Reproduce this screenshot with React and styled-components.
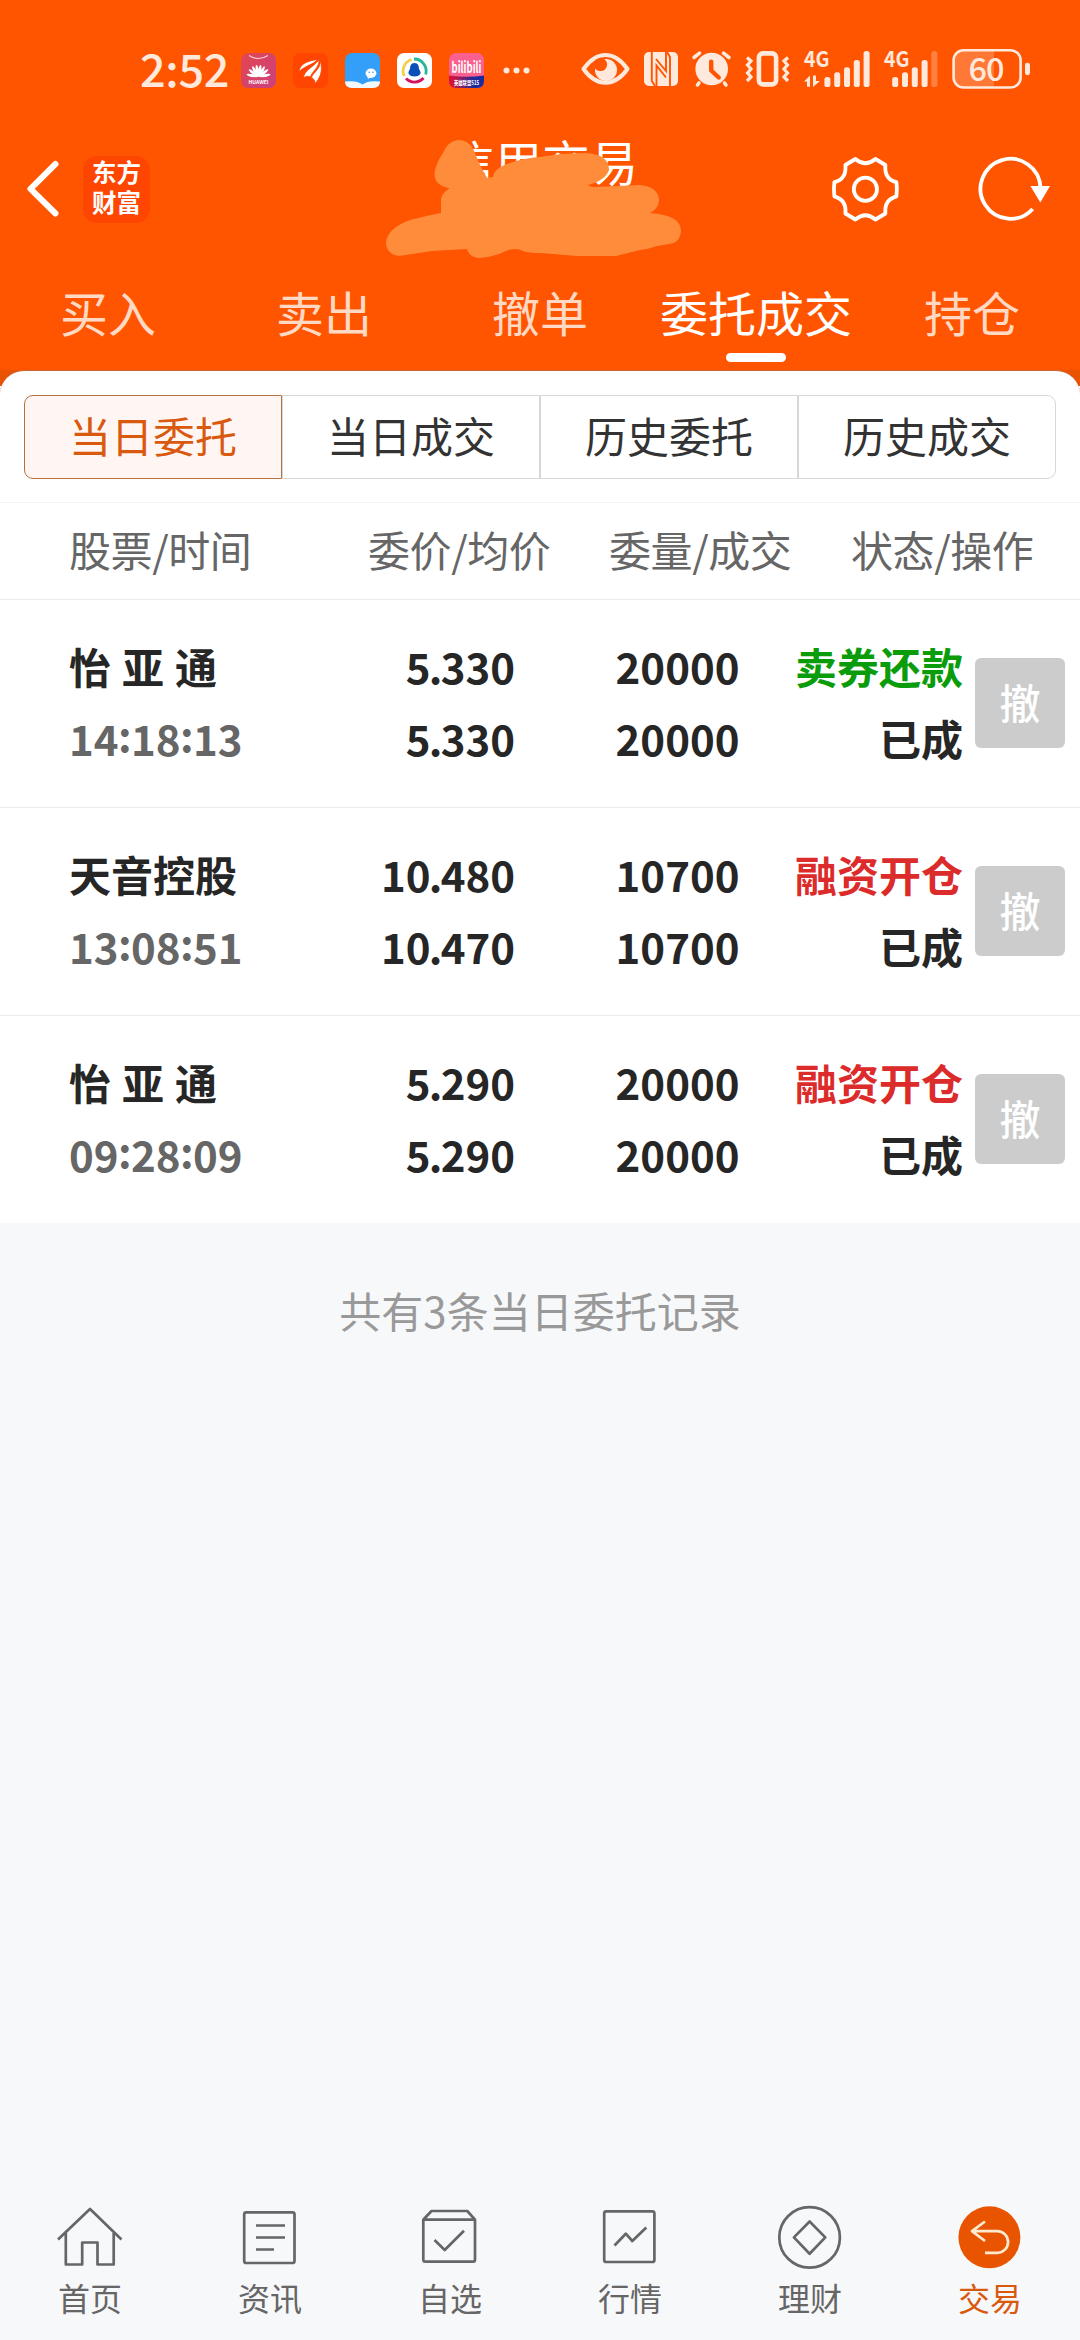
import React from 'react';
import styled, { createGlobalStyle } from 'styled-components';

const GlobalStyle = createGlobalStyle`
    * {
        box-sizing: border-box;
    }

    body {
        margin: 0;
        background: #f7f8fa;
        font-family: "Noto Sans CJK SC", "Noto Sans", sans-serif;
    }

    svg {
        display: block;
        flex-shrink: 0;
        overflow: visible;
    }
`;

const Screen = styled.div`
    display: flex;
    flex-direction: column;
    width: 1080px;
    height: 2340px;
    overflow: hidden;
    background: #f7f8fa;
`;

const Header = styled.header`
    background: #ff5500;
`;

const StatusBar = styled.div`
    display: flex;
    align-items: center;
    height: 138px;
    padding: 2px 49px 0 140px;
`;

const Clock = styled.span`
    width: 101px;
    padding-bottom: 5px;
    color: #ffe9dc;
    font-size: 45px;
    font-weight: 500;
    letter-spacing: -0.3px;
    line-height: 50px;
`;

const AppIcons = styled.div`
    display: flex;
    align-items: center;
    gap: 17px;
`;

const SystemIcons = styled.div`
    display: flex;
    gap: 14px;
    margin-left: auto;
`;

const NavBar = styled.div`
    position: relative;
    display: flex;
    align-items: center;
    height: 102px;
    padding: 0 26px 0 24px;
`;

const AppLogo = styled.div`
    display: flex;
    flex-direction: column;
    width: 67px;
    height: 67px;
    margin-left: 19px;
    padding-top: 1px;
    border-radius: 14px;
    background: #ff4600;
    color: #fff;
    font-size: 24.5px;
    font-weight: 700;
    line-height: 30px;
    text-align: center;
`;

const Title = styled.h1`
    flex: 1;
    align-self: flex-start;
    margin: 0 0 0 105px;
    color: #fff;
    font-size: 48px;
    font-weight: 400;
    line-height: 44px;
    text-align: center;
`;

/* hand-painted smudge that hides the account name */
const Smudge = styled.svg`
    position: absolute;
    left: 380px;
    top: 0;
`;

const NavActions = styled.div`
    display: flex;
    gap: 73px;
`;

const Tabs = styled.nav`
    display: flex;
    height: 130px;
`;

const Tab = styled.div`
    display: flex;
    flex: 1;
    flex-direction: column;
    align-items: center;
    padding-top: 47px;
    color: ${({ $active }) => ($active ? '#fff' : '#ffd9c4')};
    font-size: 48px;
    line-height: 48px;

    &::after {
        content: "";
        width: 60px;
        height: 9px;
        margin-top: 18px;
        border-radius: 5px;
        background: ${({ $active }) => ($active ? '#fff' : 'transparent')};
    }
`;

const CardTop = styled.div`
    background: linear-gradient(#e85200 16px, #fff 16px);
`;

const Card = styled.section`
    height: 132px;
    padding: 24px 24px 0;
    border-top: 1px solid #c8642f;
    border-radius: 24px 24px 0 0;
    background: #fff;
`;

const Segments = styled.div`
    display: flex;
`;

const Segment = styled.div`
    flex: 1;
    height: 84px;
    border: 1px solid ${({ $active }) => ($active ? '#b5713f' : '#d5d8d8')};
    background: ${({ $active }) => ($active ? '#fff6f3' : '#fff')};
    color: ${({ $active }) => ($active ? '#d9590f' : '#333')};
    font-size: 42px;
    line-height: 78px;
    text-align: center;

    &:first-child {
        border-radius: 9px 0 0 9px;
    }

    &:last-child {
        border-radius: 0 9px 9px 0;
    }
`;

const TableHead = styled.div`
    display: grid;
    grid-template-columns: 299px 241px 242px 184px;
    height: 97px;
    padding-left: 69px;
    border-top: 1px solid #f5f5f5;
    background: #fff;
    color: #666;
    font-size: 42px;
    letter-spacing: -0.4px;
    line-height: 92px;
    white-space: nowrap;
`;

const Row = styled.div`
    display: grid;
    grid-template-columns: 210px 236px 224.5px 223.5px 90px;
    height: 208px;
    padding: 30px 0 0 69px;
    border-top: 1px solid #ebebeb;
    background: #fff;
    color: #262626;
    font-size: 42px;
    font-weight: 700;
    line-height: 72px;
    white-space: nowrap;
`;

const Cell = styled.div`
    text-align: ${({ $left }) => ($left ? 'left' : 'right')};
`;

const Name = styled.div`
    word-spacing: 1.5px;
`;

const Time = styled.div`
    color: #666;
`;

const Colon = styled.span`
    position: relative;
    top: -4px;
    margin: 0 -0.6px;
`;

const Dot = styled.span`
    margin: 0 -1.8px;
`;

const Action = styled.div`
    color: ${({ $sell }) => ($sell ? '#0a9c0a' : '#dc2b2b')};
`;

const CancelButton = styled.button`
    width: 90px;
    height: 90px;
    margin: 28px 0 0 12px;
    padding: 0 0 5px;
    border: 0;
    border-radius: 6px;
    background: #ccc;
    color: #fff;
    font-family: inherit;
    font-size: 41px;
    font-weight: 500;
    line-height: 80px;
`;

const Summary = styled.p`
    margin: 64px 0 0;
    color: #999;
    font-size: 42px;
    line-height: 46px;
    text-align: center;
`;

const BottomNav = styled.nav`
    display: flex;
    height: 139px;
    margin-top: auto;
`;

const BottomItem = styled.div`
    display: flex;
    flex: 1;
    flex-direction: column;
    align-items: center;
    color: ${({ $active }) => ($active ? '#d9590f' : '#666')};
    font-size: 32px;
    line-height: 40px;
`;

const BottomLabel = styled.span`
    margin-top: 4px;
`;

const LIGHT = '#ffe9dc';

const HuaweiIcon = () => (
    <svg width="35" height="35">
        <defs>
            <linearGradient id="hw" x1="0" y1="0" x2="1" y2="1">
                <stop offset="0" stopColor="#e2474f" />
                <stop offset="1" stopColor="#cb3f80" />
            </linearGradient>
        </defs>
        <rect width="35" height="35" rx="7" fill="url(#hw)" />
        <path d="M8 2.5Q17.5 8.5 27 2.5" fill="none" stroke="#ffc9cf" strokeWidth="1.2" />
        {[-78, -52, -30, -10, 10, 30, 52, 78].map((a) => (
            <ellipse key={a} cx="17.5" cy="17.6" rx="1.5" ry="5.8" fill="#fff" transform={`rotate(${a} 17.5 24)`} />
        ))}
        <path d="M7 24.2H28V26H7Z" fill="#d84465" />
        <text x="17.5" y="30.5" textAnchor="middle" textLength="20" fontSize="5" fontWeight="700" fill="#fff">HUAWEI</text>
    </svg>
);

const EastmoneyIcon = () => (
    <svg width="35" height="35">
        <rect width="35" height="35" rx="7" fill="#ff4500" />
        <g fill="#fff" stroke="#ff4500" strokeWidth=".8">
            <path d="M6 18.5C7 11 14 8 24.5 6.5C20 12 14 11.5 6 18.5Z" />
            <path d="M10.5 25C11 17 20 15 26 6.5C26.5 15 19 18 17.5 24C14.5 22.5 12.5 23.5 10.5 25Z" />
            <path d="M22 30.5C22 26.5 20 25.5 18.5 24.5C20.5 19 27 17 27.5 7.5C30 19 27 25 22 30.5Z" />
        </g>
    </svg>
);

const ReaderIcon = () => (
    <svg width="35" height="35">
        <rect width="35" height="35" rx="7" fill="#349ff8" />
        <path d="M0 28.5Q12 27 17.5 31.5Q23 27 35 28.5Q35 35 28 35H7Q0 35 0 28.5Z" fill="#f3f8ff" />
        <ellipse cx="26" cy="20.3" rx="5.4" ry="4.7" fill="#fff" />
        <path d="M22 22L23 26L26 24Z" fill="#fff" />
        <circle cx="24.2" cy="19.3" r=".8" fill="#349ff8" />
        <circle cx="28" cy="19.3" r=".8" fill="#349ff8" />
    </svg>
);

const PenguinIcon = () => (
    <svg width="35" height="35">
        <rect width="35" height="35" rx="7" fill="#fff" />
        <g fill="none" strokeWidth="2.8">
            <path d="M7.2 23A12 12 0 0 1 14.5 6.5" stroke="#f2d04b" />
            <path d="M17 6A12 12 0 0 1 28.6 21.5" stroke="#27b79c" />
            <path d="M26.5 25A12 12 0 0 1 9 25.5" stroke="#d4145a" />
        </g>
        <path d="M17.5 10C21 10 22 13 22 16C24 19 24 21 22.7 21.5C22 24 13 24 12.3 21.5C11 21 11 19 13 16C13 13 14 10 17.5 10Z" fill="#0d4fb8" />
    </svg>
);

const BilibiliIcon = () => (
    <svg width="35" height="35">
        <defs>
            <linearGradient id="bl">
                <stop offset=".1" stopColor="#d2143c" />
                <stop offset=".7" stopColor="#1c2b9c" />
            </linearGradient>
        </defs>
        <rect width="35" height="35" rx="7" fill="#fb5f8e" />
        <path d="M0 22.5Q17.5 25 35 22.5V28Q35 35 28 35H7Q0 35 0 28Z" fill="url(#bl)" />
        <text x="17.5" y="20" textAnchor="middle" textLength="30" lengthAdjust="spacingAndGlyphs" fontSize="15" fontWeight="700" fill="#fff">bilibili</text>
        <text x="17.5" y="31.5" textAnchor="middle" textLength="25" lengthAdjust="spacingAndGlyphs" fontSize="6" fontWeight="700" fill="#fff">英雄联盟S15</text>
    </svg>
);

const MoreDots = () => (
    <svg width="30" height="35" fill={LIGHT}>
        <circle cx="5.5" cy="17.5" r="3" />
        <circle cx="15.5" cy="17.5" r="3" />
        <circle cx="25.5" cy="17.5" r="3" />
    </svg>
);

const EyeIcon = () => (
    <svg width="49" height="40">
        <path d="M2.5 19C10 8.5 17 5 24.5 5S39 8.5 46.5 19C39 29.5 32 32.7 24.5 32.7S10 29.5 2.5 19Z" fill="none" stroke={LIGHT} strokeWidth="4" strokeLinejoin="round" />
        <circle cx="25" cy="20" r="11" fill={LIGHT} />
        <circle cx="19.5" cy="14.5" r="6.6" fill="#ff5500" />
    </svg>
);

const NfcIcon = () => (
    <svg width="34" height="40">
        <rect y="2" width="34" height="34" rx="5" fill={LIGHT} />
        <g fill="none" stroke="#ff5500" strokeWidth="1.9">
            <path d="M7.8 2V31L11 36" />
            <path d="M26 36V7L23 2" />
            <path d="M12.5 36V15.5L22 27.5" />
            <path d="M12 9L22 21V2" />
        </g>
    </svg>
);

const AlarmIcon = () => (
    <svg width="39" height="40" fill="none" strokeLinecap="round" strokeLinejoin="round">
        <circle cx="19.7" cy="19" r="16.3" fill={LIGHT} />
        <path d="M2 7.5L7.5 3.2M37 7.5L31.5 3.2M7 33L5.5 35M32.5 33L34 35" stroke={LIGHT} strokeWidth="3.6" />
        <path d="M19.2 11.8V20.5L26.7 27.5" stroke="#ff5500" strokeWidth="4.4" />
    </svg>
);

const VibrateIcon = () => (
    <svg width="45" height="40" fill="none" stroke={LIGHT}>
        <rect x="13.9" y="3.4" width="17.2" height="31" rx="4" strokeWidth="4.6" />
        <path d="M2 7.5L6 11L2.5 15L6 19L2.5 23L6 27L2 31M43 7.5L39 11L42.5 15L39 19L42.5 23L39 27L43 31" strokeWidth="3.2" />
    </svg>
);

const TOPS = [27, 22.3, 17.3, 10, 1];

const Signal = ({ width, start, level, data }) => (
    <svg width={width} height="40" fill={LIGHT}>
        <text x="0" y="17" fontSize="21.5" fontWeight="700" textLength="25.5" lengthAdjust="spacingAndGlyphs">4G</text>
        {data && <path d="M0 31.5L6 25.5V36.7H3V31.5ZM9 25.5H12V31H16L9 37Z" />}
        {TOPS.map((top, i) => (
            <rect key={top} x={start + i * 9.8} y={top} width="6" height={37 - top} rx="2.6" opacity={i < level ? 1 : 0.3} />
        ))}
    </svg>
);

const Battery = () => (
    <svg width="79" height="40">
        <path d="M11 .5H42V37.5H11Q2 37.5 2 28V10Q2 .5 11 .5Z" fill={LIGHT} opacity=".24" />
        <rect x="1.6" y=".2" width="67" height="37.3" rx="10" fill="none" stroke={LIGHT} strokeWidth="2.6" />
        <rect x="73" y="12.7" width="5" height="12.5" rx="2.4" fill={LIGHT} />
        <text x="34.5" y="30.5" textAnchor="middle" fontSize="32.5" fontWeight="500" textLength="36" fill={LIGHT}>60</text>
    </svg>
);

const BackIcon = () => (
    <svg width="40" height="60" fill="none" stroke="#fff" strokeWidth="6" strokeLinecap="round" strokeLinejoin="round">
        <path d="M31.5 5L6.5 29.8L31.5 54.5" />
    </svg>
);

const GearIcon = () => (
    <svg width="72" height="72" fill="none" stroke="#fff" strokeWidth="3.8" strokeLinejoin="round">
        <path d="M26.4 6Q36.4 14.5 46.4 6L56.4 12Q55 26 67.4 29.2Q68.4 36.2 67.4 43.4Q55 47 56.4 60.5L46.4 66.5Q36.4 58 26.4 66.5L16.4 60.5Q17.8 47 5.4 43.4Q4.4 36.2 5.4 29.2Q17.8 26 16.4 12Z" />
        <circle cx="36.4" cy="36.2" r="11.6" />
    </svg>
);

const RefreshIcon = () => (
    <svg width="80" height="72">
        <path d="M66.5 35A30 30 0 1 0 58.7 56" fill="none" stroke="#fff" strokeWidth="3.8" />
        <path d="M56.4 33H76L66.3 49.5Z" fill="#fff" />
    </svg>
);

const icons = {
    home: <path d="M4 38.5L36 8L67.5 38.5M11.8 32V63.5H28.2V41.5H43.5V63.5H59.7V32" />,
    news: (
        <>
            <rect x="10.2" y="11.3" width="50.3" height="50.7" rx="2" />
            <path d="M22 24.5H51M22 36.5H51M22 48.5H40" />
        </>
    ),
    picks: (
        <>
            <path d="M9.3 18.7H61V58.5Q61 60.7 59 60.7H11.5Q9.3 60.7 9.3 58.5ZM9.3 18.7L17.5 10H53.3L61 18.7" />
            <path d="M20.5 39L30.7 49L50 29.7" />
        </>
    ),
    market: (
        <>
            <rect x="10.2" y="10.3" width="50.2" height="50.7" rx="2" />
            <path d="M20.5 44.5L31.8 32.7L38.3 40L52.3 26.5" />
        </>
    ),
    wealth: (
        <>
            <circle cx="35.6" cy="36.4" r="30.3" />
            <path d="M35.6 20.5L51.3 36.4L35.6 52.8L19.9 36.4Z" />
        </>
    ),
    trade: (
        <>
            <circle cx="35.4" cy="36.3" r="31" fill="#e95400" stroke="none" />
            <path d="M31 20.5L18 30.2L31 40M18 30.2H43.3A10.8 10.8 0 0 1 43.3 51.8H31" stroke="#ffe9d0" />
        </>
    ),
};

const tabs = ['买入', '卖出', '撤单', '委托成交', '持仓'];
const segments = ['当日委托', '当日成交', '历史委托', '历史成交'];
const columns = ['股票/时间', '委价/均价', '委量/成交', '状态/操作'];

const orders = [
    { name: '怡 亚 通', time: '14:18:13', price: '5.330', avg: '5.330', qty: '20000', done: '20000', action: '卖券还款', sell: true },
    { name: '天音控股', time: '13:08:51', price: '10.480', avg: '10.470', qty: '10700', done: '10700', action: '融资开仓' },
    { name: '怡 亚 通', time: '09:28:09', price: '5.290', avg: '5.290', qty: '20000', done: '20000', action: '融资开仓' },
];

const bottomItems = [
    { icon: 'home', label: '首页' },
    { icon: 'news', label: '资讯' },
    { icon: 'picks', label: '自选' },
    { icon: 'market', label: '行情' },
    { icon: 'wealth', label: '理财' },
    { icon: 'trade', label: '交易' },
];

const Price = ({ value }) => {
    const [whole, decimals] = value.split('.');
    return <div>{whole}<Dot>.</Dot>{decimals}</div>;
};

const OrderRow = ({ order }) => {
    const [h, m, s] = order.time.split(':');
    return (
        <Row>
            <Cell $left>
                <Name>{order.name}</Name>
                <Time>{h}<Colon>:</Colon>{m}<Colon>:</Colon>{s}</Time>
            </Cell>
            <Cell>
                <Price value={order.price} />
                <Price value={order.avg} />
            </Cell>
            <Cell>
                <div>{order.qty}</div>
                <div>{order.done}</div>
            </Cell>
            <Cell>
                <Action $sell={order.sell}>{order.action}</Action>
                <div>已成</div>
            </Cell>
            <CancelButton>撤</CancelButton>
        </Row>
    );
};

const App = () => {
    return (
        <Screen>
            <GlobalStyle />
            <Header>
                <StatusBar>
                    <Clock>2:52</Clock>
                    <AppIcons>
                        <HuaweiIcon />
                        <EastmoneyIcon />
                        <ReaderIcon />
                        <PenguinIcon />
                        <BilibiliIcon />
                        <MoreDots />
                    </AppIcons>
                    <SystemIcons>
                        <EyeIcon />
                        <NfcIcon />
                        <AlarmIcon />
                        <VibrateIcon />
                        <Signal width={66} start={20.4} level={5} data />
                        <Signal width={54} start={8.2} level={4} />
                        <Battery />
                    </SystemIcons>
                </StatusBar>
                <NavBar>
                    <BackIcon />
                    <AppLogo>
                        <span>东方</span>
                        <span>财富</span>
                    </AppLogo>
                    <Title>信用交易</Title>
                    <NavActions>
                        <GearIcon />
                        <RefreshIcon />
                    </NavActions>
                    <Smudge width="310" height="122" viewBox="380 138 310 122">
                        <path
                            fill="#ff8c3a"
                            d="M458 140Q470 140 475 153Q479 164 487 178L493 177Q494 168 510 163Q524 158 540 157L561 154L585 153Q609 154 609 170Q606 180 588 185Q590 187 594 187L640 185Q659 187 659 201Q658 209 650 213Q681 215 681 231Q680 243 669 244L657 246L647 249L640 250L616 256H578L540 253Q528 253 523 251Q516 247 506 251Q494 257 479 258Q469 257 467 249L432 251L399 256Q386 254 386 242Q388 228 410 220Q425 216 441 213V199Q443 189 460 184Q452 189 448 188Q434 185 434.5 173Q436 163 443 153Q448 141 458 140Z"
                        />
                    </Smudge>
                </NavBar>
                <Tabs>
                    {tabs.map((tab) => (
                        <Tab key={tab} $active={tab === '委托成交'}>{tab}</Tab>
                    ))}
                </Tabs>
            </Header>
            <CardTop>
                <Card>
                    <Segments>
                        {segments.map((segment, i) => (
                            <Segment key={segment} $active={i === 0}>{segment}</Segment>
                        ))}
                    </Segments>
                </Card>
            </CardTop>
            <TableHead>
                {columns.map((column) => (
                    <div key={column}>{column}</div>
                ))}
            </TableHead>
            {orders.map((order) => (
                <OrderRow key={order.time} order={order} />
            ))}
            <Summary>共有3条当日委托记录</Summary>
            <BottomNav>
                {bottomItems.map(({ icon, label }) => (
                    <BottomItem key={icon} $active={icon === 'trade'}>
                        <svg width="72" height="72" fill="none" stroke="#666" strokeWidth="2.7" strokeLinejoin="round">
                            {icons[icon]}
                        </svg>
                        <BottomLabel>{label}</BottomLabel>
                    </BottomItem>
                ))}
            </BottomNav>
        </Screen>
    );
};

export default App;
